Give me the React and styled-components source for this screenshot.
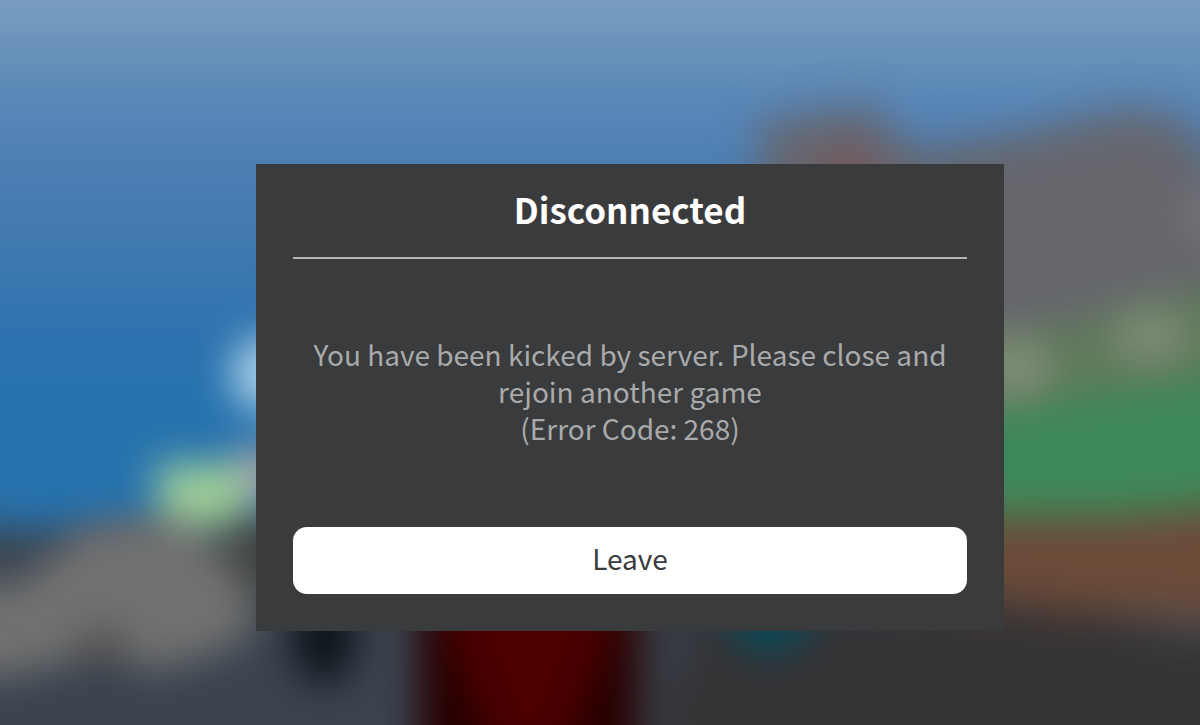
import React from "react";
import styled, { createGlobalStyle } from "styled-components";

const GlobalStyle = createGlobalStyle`
  * { box-sizing: border-box; }
  body { margin: 0; background: #37393d; }
`;

const Screen = styled.main`
  position: relative;
  display: flex;
  align-items: center;
  justify-content: center;
  min-height: 100vh;
  padding: 70px 0 0 60px;
  overflow: hidden;
  font-family: "Noto Sans CJK SC", "Noto Sans", sans-serif;
`;

const Backdrop = styled.svg`
  position: absolute;
  inset: 0;
  width: 100%;
  height: 100%;
`;

const Dialog = styled.section`
  position: relative;
  display: flex;
  flex-direction: column;
  width: 748px;
  max-width: 100%;
  padding: 18px 37px 37px;
  background: #3a3b3c;
`;

const Title = styled.h1`
  margin: 0;
  padding-bottom: 21px;
  border-bottom: 2px solid #b4b5b6;
  color: #fff;
  font-size: 35px;
  font-weight: 700;
  line-height: 54px;
  text-align: center;
`;

const Message = styled.p`
  margin: 0;
  padding: 77px 16px 80px;
  color: #a9aaab;
  font-size: 28px;
  line-height: 37px;
  text-align: center;
`;

const LeaveButton = styled.button`
  height: 67px;
  padding: 0 0 6px;
  border: 0;
  border-radius: 14px;
  background: #fff;
  color: #393b3d;
  font: inherit;
  font-size: 28px;
  line-height: 40px;
  cursor: pointer;
`;

function GameScene() {
  return (
    <Backdrop viewBox="0 0 1200 725" preserveAspectRatio="none" aria-hidden="true">
      <defs>
        <linearGradient id="sky" x1="0" y1="0" x2="0" y2="1">
          <stop offset="0" stopColor="#7a9ec2" />
          <stop offset="0.08" stopColor="#6690b8" />
          <stop offset="0.14" stopColor="#5987b8" />
          <stop offset="0.22" stopColor="#4e7fb3" />
          <stop offset="0.34" stopColor="#4079b0" />
          <stop offset="0.45" stopColor="#2f73af" />
          <stop offset="0.55" stopColor="#2773ae" />
          <stop offset="1" stopColor="#2872ad" />
        </linearGradient>
        <filter id="soft" x="-50%" y="-50%" width="200%" height="200%" colorInterpolationFilters="sRGB">
          <feGaussianBlur stdDeviation="21" />
        </filter>
        <filter id="near" x="-50%" y="-50%" width="200%" height="200%" colorInterpolationFilters="sRGB">
          <feGaussianBlur stdDeviation="19" />
        </filter>
      </defs>
      <rect width="1200" height="725" fill="url(#sky)" />
      <g filter="url(#soft)">
        <path d="M760 123L870 105L912 151L1030 132L1120 110L1180 116L1220 170L1260 200V380H760Z" fill="#66666d" />
        <path d="M820 156H880V190H820Z" fill="#7c5257" />
        <path d="M960 346L1080 318L1260 276V420H960Z" fill="#607a5b" />
        <path d="M960 410L1080 396L1260 370V520H960Z" fill="#3e8958" />
        <path d="M640 595L1000 596L1160 624L1270 640V800H640Z" fill="#353335" />
        <path d="M900 517L1120 516L1270 501V634L1160 620L900 592Z" fill="#6c4b39" />
        <path d="M-80 522L120 535L300 526L660 570V800H-80Z" fill="#3b444f" />
      </g>
      <g filter="url(#near)">
        <ellipse cx="1150" cy="336" rx="38" ry="27" fill="#7f8b77" />
        <ellipse cx="1015" cy="367" rx="36" ry="31" fill="#818d78" />
        <ellipse cx="1210" cy="213" rx="20" ry="25" fill="#7b7b7d" />
        <ellipse cx="264" cy="374" rx="32" ry="38" fill="#acd2e8" />
        <ellipse cx="262" cy="474" rx="36" ry="28" fill="#a39ba6" />
        <path d="M155 464H246V526H163Z" fill="#a0d098" />
        <path d="M210 522H300V600H250Z" fill="#404343" />
        <path d="M-60 592L25 580L64 544L94 522L184 517L228 560L260 612L235 646L152 672L105 646L50 668L-60 686Z" fill="#717171" />
        <path d="M84 628L130 628L120 660H70Z" fill="#5a5654" />
        <ellipse cx="324" cy="638" rx="32" ry="46" fill="#0d1219" />
        <path d="M418 570H640V780H418Z" fill="#260000" />
        <path d="M438 570H616L606 650L560 760H500L456 660Z" fill="#4c0000" />
        <ellipse cx="674" cy="648" rx="16" ry="34" fill="#37404d" />
        <ellipse cx="770" cy="620" rx="42" ry="34" fill="#0a4856" />
      </g>
    </Backdrop>
  );
}

export default function App() {
  return (
    <>
      <GlobalStyle />
      <Screen>
        <GameScene />
        <Dialog role="alertdialog" aria-labelledby="dialog-title" aria-describedby="dialog-message">
          <Title id="dialog-title">Disconnected</Title>
          <Message id="dialog-message">
            You have been kicked by server. Please close and rejoin another game
            <br />
            (Error Code: 268)
          </Message>
          <LeaveButton type="button">Leave</LeaveButton>
        </Dialog>
      </Screen>
    </>
  );
}
